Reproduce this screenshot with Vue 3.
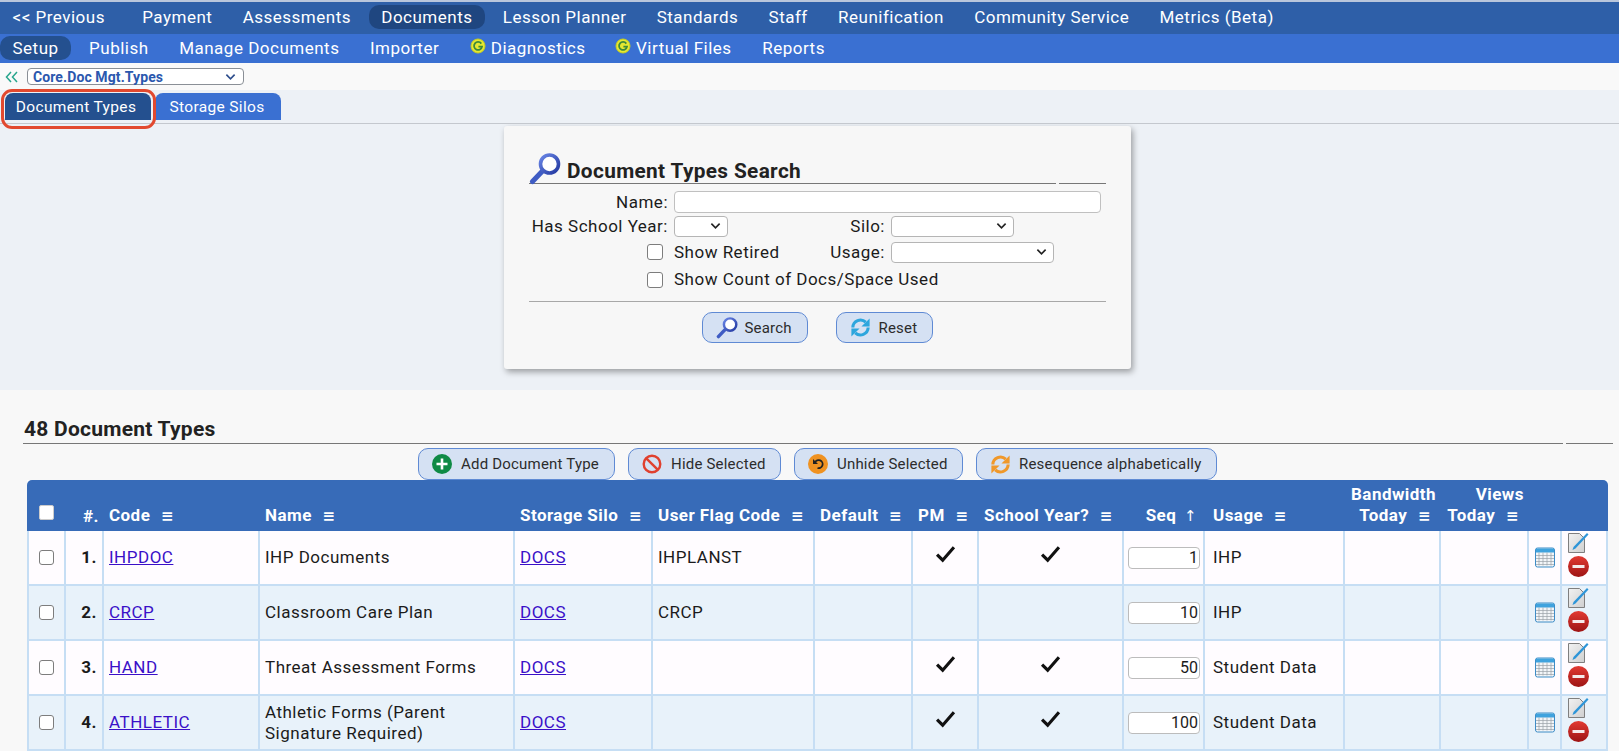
<script setup>
const nav1 = ['<< Previous','Payment','Assessments','Documents','Lesson Planner','Standards','Staff','Reunification','Community Service','Metrics (Beta)']
const nav2 = [
  {t:'Setup',on:true},{t:'Publish'},{t:'Manage Documents'},{t:'Importer'},
  {t:'Diagnostics',g:true},{t:'Virtual Files',g:true},{t:'Reports'}
]
const heads = [
  {t:'Storage Silo'},{t:'User Flag Code'},{t:'Default'},{t:'PM'},{t:'School Year?'}
]
const rows = [
  {n:1,code:'IHPDOC',name:'IHP Documents',flag:'IHPLANST',pm:true,sy:true,seq:1,usage:'IHP'},
  {n:2,code:'CRCP',name:'Classroom Care Plan',flag:'CRCP',pm:false,sy:false,seq:10,usage:'IHP'},
  {n:3,code:'HAND',name:'Threat Assessment Forms',flag:'',pm:true,sy:true,seq:50,usage:'Student Data'},
  {n:4,code:'ATHLETIC',name:'Athletic Forms (Parent Signature Required)',flag:'',pm:true,sy:true,seq:100,usage:'Student Data'}
]
</script>

<template>
  <div class="page">
    <nav class="nav1">
      <a v-for="n in nav1" :key="n" class="item" :class="{on:n==='Documents'}">{{ n }}</a>
    </nav>
    <nav class="nav2">
      <a v-for="n in nav2" :key="n.t" class="item" :class="{on:n.on,hasg:n.g}">
        <svg v-if="n.g" class="g" viewBox="0 0 16 16"><circle cx="8" cy="8" r="7" fill="#e6e832"/><circle cx="8" cy="8" r="7" fill="none" stroke="#c9cf1e" stroke-width="1"/><path d="M11.3 5.6A4 4 0 1 0 12 8.6H8.4" fill="none" stroke="#3e8a3a" stroke-width="1.8"/></svg>{{ n.t }}
      </a>
    </nav>
    <div class="picker">
      <svg class="chev" viewBox="0 0 14 12"><path d="M6 1 1.5 6 6 11M12 1 7.5 6 12 11" fill="none" stroke="#27a58c" stroke-width="1.5"/></svg>
      <div class="pick-sel"><span>Core.Doc Mgt.Types</span><svg viewBox="0 0 12 8"><path d="M1.5 1.5 6 6l4.500-4.500" fill="none" stroke="#2d4d8c" stroke-width="1.800"/></svg></div>
    </div>
    <div class="tabs">
      <a class="tab active">Document Types</a>
      <a class="tab">Storage Silos</a>
      <i class="ring"></i>
    </div>

    <section class="search-zone">
      <div class="panel">
        <div class="rule-head">
          <h2>
            <svg class="mag big" viewBox="0 0 32 32"><use href="#magnifier"/></svg>
            Document Types Search
          </h2>
          <span class="stub"></span>
        </div>
        <div class="form">
          <label class="lab">Name:</label>
          <input class="txt" />
          <label class="lab">Has School Year:</label>
          <div class="line">
            <div class="sel sy"><svg viewBox="0 0 12 8"><path d="M1.500 1.500 6 6l4.500-4.500" fill="none" stroke="#222" stroke-width="1.800"/></svg></div>
            <label class="lab2 silo">Silo:</label>
            <div class="sel silo-s"><svg viewBox="0 0 12 8"><path d="M1.500 1.500 6 6l4.500-4.500" fill="none" stroke="#222" stroke-width="1.800"/></svg></div>
          </div>
          <span class="cbcell"><input type="checkbox" class="cb" /></span>
          <div class="line">
            <span class="cbt ret">Show Retired</span>
            <label class="lab2 usage">Usage:</label>
            <div class="sel use-s"><svg viewBox="0 0 12 8"><path d="M1.500 1.500 6 6l4.500-4.500" fill="none" stroke="#222" stroke-width="1.800"/></svg></div>
          </div>
          <span class="cbcell"><input type="checkbox" class="cb" /></span>
          <span class="cbt last">Show Count of Docs/Space Used</span>
        </div>
        <div class="hr"></div>
        <div class="panel-btns">
          <button class="btn b-search"><svg class="mag" viewBox="0 0 32 32"><use href="#magnifier"/></svg>Search</button>
          <button class="btn b-reset">
            <svg class="ic ref" viewBox="0 0 24 24"><g fill="none" stroke="#2da6dd" stroke-width="3.200"><path d="M4 12A8 8 0 0 1 17.500 6.500"/><path d="M20 12A8 8 0 0 1 6.500 17.500"/></g><path d="M21.500 2.500v8.500h-8.500zM2.500 21.500V13H11z" fill="#2da6dd"/></svg>Reset
          </button>
        </div>
      </div>
    </section>

    <section class="list">
      <div class="rule-head list-head">
        <h2>48 Document Types</h2>
        <span class="stub"></span>
      </div>
      <div class="actions">
        <button class="btn a1">
          <svg class="ic" viewBox="0 0 20 20"><circle cx="10" cy="10" r="10" fill="#0f8a45"/><path d="M10 4.500v11M4.500 10h11" stroke="#fff" stroke-width="2.600"/></svg>Add Document Type
        </button>
        <button class="btn a2">
          <svg class="ic" viewBox="0 0 20 20"><circle cx="10" cy="10" r="8.300" fill="none" stroke="#e0402f" stroke-width="2.400"/><path d="M4.300 4.300 15.700 15.700" stroke="#e0402f" stroke-width="2.400"/></svg>Hide Selected
        </button>
        <button class="btn a3">
          <svg class="ic" viewBox="0 0 20 20"><circle cx="10" cy="10" r="10" fill="#ef9222"/><path d="M7 8.500A4 4 0 1 1 9.500 14" fill="none" stroke="#222" stroke-width="1.800"/><path d="M5 5v5h5z" fill="#222"/></svg>Unhide Selected
        </button>
        <button class="btn a4">
          <svg class="ic ref" viewBox="0 0 24 24"><g fill="none" stroke="#f0982a" stroke-width="3.200"><path d="M4 12A8 8 0 0 1 17.500 6.500"/><path d="M20 12A8 8 0 0 1 6.500 17.500"/></g><path d="M21.500 2.500v8.500h-8.500zM2.500 21.500V13H11z" fill="#f0982a"/></svg>Resequence alphabetically
        </button>
      </div>
      <table class="grid">
        <colgroup>
          <col style="width:39px"/><col style="width:38px"/><col style="width:156px"/><col style="width:255px"/>
          <col style="width:138px"/><col style="width:162px"/><col style="width:98px"/><col style="width:66px"/>
          <col style="width:145px"/><col style="width:81px"/><col style="width:140px"/><col style="width:96px"/>
          <col style="width:88px"/><col style="width:33px"/><col style="width:46px"/>
        </colgroup>
        <thead>
          <tr>
            <th class="c"><span class="hcb"></span></th>
            <th class="r">#.</th>
            <th class="cd">Code <b class="m">≡</b></th>
            <th>Name <b class="m">≡</b></th>
            <th v-for="h in heads" :key="h.t" class="mid">{{ h.t }} <b class="m">≡</b></th>
            <th class="r seqh">Seq <b class="m ar">↑</b></th>
            <th class="ush">Usage <b class="m">≡</b></th>
            <th class="r two">Bandwidth<br/>Today <b class="m">≡</b></th>
            <th class="r two">Views<br/>Today <b class="m">≡</b></th>
            <th></th>
            <th></th>
          </tr>
        </thead>
        <tbody>
          <tr v-for="r in rows" :key="r.n">
            <td class="c"><input type="checkbox" class="cb" /></td>
            <td class="r num">{{ r.n }}.</td>
            <td class="cd"><a class="lnk">{{ r.code }}</a></td>
            <td class="nm">{{ r.name }}</td>
            <td><a class="lnk">DOCS</a></td>
            <td>{{ r.flag }}</td>
            <td></td>
            <td class="c"><svg v-if="r.pm" class="tick" viewBox="0 0 18 16"><path d="M1.500 8.500 6.500 13.500 16.500 2" fill="none" stroke="#111" stroke-width="2.800"/></svg></td>
            <td class="c"><svg v-if="r.sy" class="tick" viewBox="0 0 18 16"><path d="M1.500 8.500 6.500 13.500 16.500 2" fill="none" stroke="#111" stroke-width="2.800"/></svg></td>
            <td class="seq"><input class="seqin" :value="r.seq" /></td>
            <td class="us">{{ r.usage }}</td>
            <td></td>
            <td></td>
            <td class="c ics">
              <svg class="cal" viewBox="0 0 20 20"><rect x=".5" y=".5" width="19" height="19" rx="2" fill="#f2f5f8" stroke="#3d8cc6"/><rect x="1" y="1" width="18" height="4" fill="#3fa3de"/><path d="M4 5v13M8 5v13M12 5v13M16 5v13M1 8h18M1 11h18M1 14h18M1 17h18" stroke="#9aa0a8" stroke-width=".7"/></svg>
            </td>
            <td class="ics edit">
              <div class="stack">
                <svg class="ed" viewBox="0 0 21 21"><defs><linearGradient id="pg" x1="0" x2="1" y1="0" y2="1"><stop offset="0" stop-color="#f2f2f2"/><stop offset="1" stop-color="#cfcfcf"/></linearGradient></defs><path d="M.5 1.500h11l5 5v14H.5z" fill="url(#pg)" stroke="#7f7f7f"/><path d="M5.500 15 19 1l1.500 1.500L7.500 16.500 4.500 18z" fill="#2d95d8"/></svg>
                <svg class="rm" viewBox="0 0 21 21"><defs><linearGradient id="rd" x1="0" x2="0" y1="0" y2="1"><stop offset="0" stop-color="#e23a32"/><stop offset="1" stop-color="#9d1414"/></linearGradient></defs><circle cx="10.500" cy="10.500" r="10.500" fill="url(#rd)"/><rect x="4.500" y="9" width="12" height="3" fill="#f4eaea"/></svg>
              </div>
            </td>
          </tr>
        </tbody>
      </table>
    </section>

    <svg class="defs" width="0" height="0">
      <defs>
        <linearGradient id="lens" x1="0" x2="1" y1="0" y2="1"><stop offset="0" stop-color="#6a86e6"/><stop offset="1" stop-color="#2238a0"/></linearGradient>
        <symbol id="magnifier" viewBox="0 0 32 32">
          <path d="M13.500 18 3.500 28.500" stroke="#3f5cc4" stroke-width="5" stroke-linecap="round"/>
          <circle cx="20.500" cy="11" r="9" fill="#fff" stroke="url(#lens)" stroke-width="3.600"/>
        </symbol>
      </defs>
    </svg>
  </div>
</template>

<style>
html, body { margin: 0; background: #f8f8f8; overflow: hidden; }
</style>

<style scoped>
.page { width: 1619px; height: 751px; overflow: hidden; font-family: Roboto, "Liberation Sans", sans-serif; font-size: 17px; letter-spacing: .5px; color: #1b1b1b; position: relative; }
.defs { position: absolute; }
.nav1 { height: 32px; background: #2e5fa8; border-top: 2px solid #b9c6dc; display: flex; align-items: center; gap: 5.250px; }
.nav1 .item { position: relative; top: -1px; }
.nav1 .item:first-child { margin-right: 7px; }
.nav2 { height: 29px; background: #3a70d2; display: flex; align-items: center; gap: 5.500px; letter-spacing: .5px; }
.item { color: #fff; font-size: 17px; padding: 0 12.500px; height: 24px; line-height: 24px; border-radius: 10px; display: inline-flex; align-items: center; white-space: nowrap; }
.nav2 .item { position: relative; top: -1px; height: 24px; }
.nav2 .item.hasg { padding-left: 11.500px; }
.nav2 .item.hasg:nth-child(5) { margin-left: 1px; }
.nav1 .item.on { background: #1f4680; }
.nav2 .item.on { background: #24508f; }
.g { width: 16px; height: 16px; margin-right: 5px; position: relative; top: -2px; }
.picker { height: 27px; background: #f9f9f9; display: flex; align-items: center; padding-left: 5px; gap: 8px; }
.chev { width: 14px; height: 12px; }
.pick-sel { width: 217px; height: 17px; box-sizing: border-box; background: #fff; border: 1px solid #8a8f96; border-radius: 4px; display: flex; align-items: center; justify-content: space-between; padding: 0 7px 0 5px; font-size: 14px; font-weight: 700; color: #2b58ae; letter-spacing: .1px; }
.pick-sel svg { width: 11px; height: 8px; }
.tabs { height: 34px; background: #edf1f6; display: flex; align-items: flex-end; padding: 0 0 3px 5px; gap: 4px; position: relative; border-bottom: 1px solid #c4c8ce; box-sizing: border-box; }
.tab { height: 27px; line-height: 29px; box-sizing: border-box; width: 126px; padding-right: 2px; text-align: center; background: #3a70d2; color: #fff; font-size: 15.500px; letter-spacing: .35px; border-radius: 8px 8px 0 0; white-space: nowrap; }
.tab.active { background: #24508f; width: 146px; padding-right: 4px; }
.ring { position: absolute; left: 1px; top: -1px; width: 149px; height: 34px; border: 3px solid #e2492f; border-radius: 11px; }
.search-zone { height: 266px; background: #edf1f6; box-sizing: border-box; padding: 2px 0 0 504px; }
.panel { width: 627px; height: 243px; box-sizing: border-box; background: #f7f7f7; border-radius: 3px; box-shadow: 2px 3px 6px rgba(0,0,0,.35); padding: 27px 25px 0 25px; }
.rule-head { display: flex; gap: 3px; align-items: flex-end; }
.rule-head h2 { flex: 1; margin: 0; font-size: 20.800px; font-weight: 700; border-bottom: 1px solid #777; line-height: 24px; display: flex; align-items: flex-end; letter-spacing: .35px; color: #222; }
.stub { width: 47px; border-bottom: 1px solid #777; }
.mag.big { width: 32px; height: 32px; margin: 0 6px -2px 0; }
.form { display: grid; grid-template-columns: 139px 1fr; column-gap: 6px; margin-top: 7px; align-items: center; }
.lab { text-align: right; height: 22px; line-height: 22px; white-space: nowrap; }
.lab2 { text-align: right; }
.txt { width: 427px; height: 22px; box-sizing: border-box; border: 1px solid #c0c0c0; border-radius: 4px; background: #fff; padding: 0; }
.line { display: flex; align-items: center; height: 26px; }
.sel { height: 21px; box-sizing: border-box; background: #fff; border: 1px solid #b5b5b5; border-radius: 4px; display: flex; align-items: center; justify-content: flex-end; padding-right: 6px; }
.sel svg { width: 11px; height: 8px; }
.sy { width: 54px; }
.silo { width: 157px; }
.silo-s { width: 123px; margin-left: 6px; }
.usage { width: 61px; }
.use-s { width: 163px; margin-left: 6px; }
.ret { width: 150px; }
.cbcell { justify-self: end; height: 16px; display: flex; margin-right: 5px; }
.cb { width: 16px; height: 16px; margin: 0; appearance: none; background: #fff; border: 1.500px solid #7d7d7d; border-radius: 3px; box-sizing: border-box; display: block; }
.cbt { white-space: nowrap; line-height: 26px; }
.cbt.last { height: 29px; line-height: 29px; }
.hr { height: 1px; background: #a8a8a8; margin-top: 7px; }
.panel-btns { display: flex; justify-content: center; gap: 28px; margin-top: 10px; padding-right: 1px; }
.btn { height: 31px; box-sizing: border-box; background: #d5e1f3; border: 1px solid #5f8ad4; border-radius: 10px; display: inline-flex; align-items: center; gap: 7px; padding: 0 14px; font: 15px Roboto, sans-serif; letter-spacing: .2px; color: #2c2c2c; white-space: nowrap; }
.b-search { width: 106px; padding-left: 13px; }
.b-search .mag { width: 22px; height: 22px; }
.b-reset { width: 97px; padding-left: 13px; }
.ic { width: 20px; height: 20px; flex: none; }
.ic.ref { width: 23px; height: 23px; margin-left: -1px; }
.list { height: 361px; background: #f8f8f8; padding: 22px 6px 0 23px; box-sizing: border-box; }
.list-head h2 { line-height: 27px; padding: 4px 0 0 1px; font-size: 21px; letter-spacing: .25px; }
.actions { display: flex; justify-content: flex-start; gap: 13px; margin: 4px 0 0 395px; height: 32px; }
.actions .btn { padding-left: 13px; height: 32px; gap: 9px; }
.actions .btn.a4 { gap: 7px; }
.a1 { width: 197px; }
.a2 { width: 153px; }
.a3 { width: 169px; }
.a4 { width: 241px; }
.grid { border-collapse: separate; border-spacing: 0; table-layout: fixed; width: 1581px; margin-left: 4px; background: #fff; }
.grid th { background: #376bb8; color: #fff; height: 51px; box-sizing: border-box; font-size: 17px; font-weight: 700; text-align: left; vertical-align: bottom; padding: 0 5px 4px 5px; line-height: 21px; white-space: nowrap; overflow: visible; letter-spacing: .45px; }
.grid th:first-child { border-top-left-radius: 5px; }
.grid th:last-child { border-top-right-radius: 5px; }
.grid th.c { text-align: center; padding: 0 0 6px; }
.grid th.r { text-align: right; }
.grid th.two .m { margin-right: 5px; }
.grid th.ush { padding-left: 8px; }
.grid th.cd, .grid td.cd { padding-left: 5px; }
.m { font-weight: 700; margin-left: 6px; font-family: "DejaVu Sans", sans-serif; font-size: 15px; }
.ar { margin-left: 3px; margin-right: 3px; font-weight: 400; }
.hcb { display: inline-block; width: 15px; height: 15px; background: #fff; border-radius: 2px; border: 1px solid #ccc; box-sizing: border-box; }
.grid td { height: 55px; box-sizing: border-box; border-right: 2px solid #c6def4; border-bottom: 2px solid #c6def4; padding: 0 5px; font-size: 17px; vertical-align: middle; line-height: 21px; }
.grid td:first-child { border-left: 2px solid #c6def4; }
.grid tr:nth-child(odd) td { background: #fffcff; }
.grid tr:nth-child(even) td { background: #e8f2fa; }
.grid td.c { text-align: center; padding: 0; }
.grid td.r { text-align: right; }
.grid .cb { width: 15px; height: 15px; margin: 0 auto; }
.grid td.us { padding-left: 8px; }
.num { font-weight: 700; }
.lnk { color: #3a10c8; text-decoration: underline; }
.tick { width: 21px; height: 18px; display: block; margin: -7px auto 0; }
.seq { text-align: right; padding: 0 3px !important; }
.seqin { width: 72px; height: 22px; box-sizing: border-box; border: 1px solid #bcbcbc; border-radius: 4px; background: #fff; text-align: right; padding: 0 1px; font: 16px Roboto, sans-serif; color: #1b1b1b; }
.cal { width: 20px; height: 21px; display: block; margin: 0 auto; }
.grid td.edit { padding: 0 0 7px 6px; }
.stack { display: flex; flex-direction: column; align-items: flex-start; gap: 3px; }
.ed, .rm { width: 21px; height: 21px; display: block; }
</style>
